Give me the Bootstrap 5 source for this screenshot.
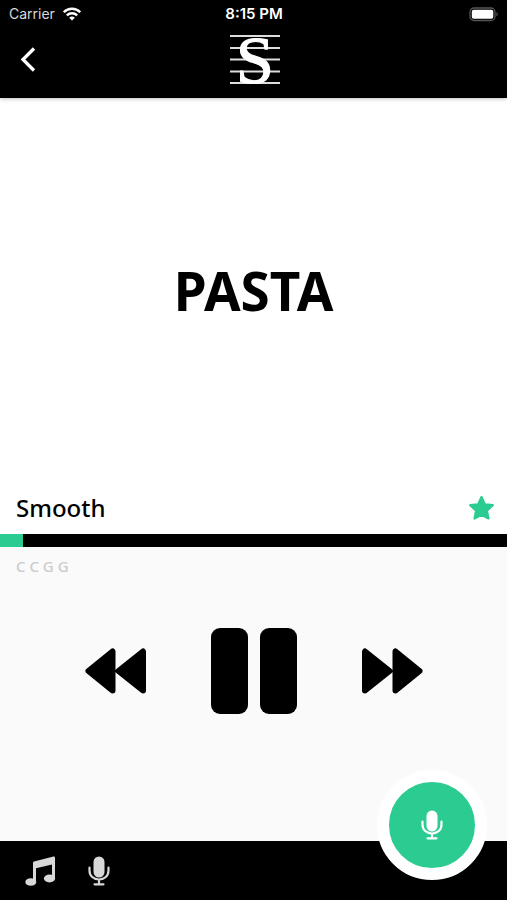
<!DOCTYPE html>
<html lang="en">
<head>
<meta charset="utf-8">
<meta name="viewport" content="width=device-width, initial-scale=1">
<title>Smooth</title>
<link href="https://cdn.jsdelivr.net/npm/bootstrap@5.3.0/dist/css/bootstrap.min.css" rel="stylesheet">
<style>
  :root { --accent: #2bcb91; }
  body { font-family: "Noto Sans", sans-serif; color: #000; background: #fafafa; }
  svg { display: block; }
  .top-bar { background: #000; color: #fff; box-shadow: 0 1px 4px rgba(0,0,0,.25); z-index: 1; }
  .status { font: 14px/28px Inter, sans-serif; height: 28px; padding: 0 8px 0 9px; }
  .status .carrier { color: #d8d8d8; }
  .status .clock { font-weight: 600; font-size: 15px; }
  .title-row { height: 70px; padding: 0 18px 0 16px; }
  .logo { overflow: visible; }
  .plain { background: none; border: 0; padding: 0; color: inherit; }
  .lyric-area { flex: 384 1 0; background: #fff; padding-top: 2px; }
  .lyric { font-size: 53px; line-height: 64px; font-weight: 700; }
  .song-row { background: #fff; height: 51px; padding: 0 12px 1px 16px; }
  .song-name { font-size: 24px; line-height: 32px; font-weight: 500; }
  .song-progress { height: 13px; background: #000; border-radius: 0; }
  .song-progress .progress-bar { background: var(--accent); }
  .deck { flex: 295 1 0; }
  .notes { font-size: 15px; line-height: 20px; font-weight: 500; color: #ccc; padding: 9px 16px 0; }
  .transport { gap: 64px; padding-top: 52px; }
  .bottom-bar { background: #000; color: #d8d8d8; height: 59px; padding: 0 25px; gap: 32px; }
  .record { position: absolute; right: 20px; bottom: 20px; width: 110px; height: 110px; border: 12px solid #fff; background: var(--accent); color: #fff; }
</style>
<script src="https://cdn.jsdelivr.net/npm/bootstrap@5.3.0/dist/js/bootstrap.bundle.min.js"></script>
</head>
<body>
<svg class="d-none" aria-hidden="true">
  <symbol id="mic" viewBox="0 0 22 30">
    <rect x="5.500" y="0.500" width="11" height="21" rx="5.500" fill="currentColor"/>
    <path d="M1.500 11.500V14.500C1.500 20 5.500 23.500 11 23.500S20.500 20 20.500 14.500V11.500M11 23.500V28M6.500 28.300H15.500" fill="none" stroke="currentColor" stroke-width="2.200" stroke-linecap="round"/>
  </symbol>
  <symbol id="skip" viewBox="0 0 62 48">
    <path d="M4 4.500V43.500L28.500 24ZM34.500 4.500V43.500L58.500 24Z" fill="currentColor" stroke="currentColor" stroke-width="6" stroke-linejoin="round"/>
  </symbol>
</svg>
<div class="position-relative d-flex flex-column min-vh-100">
  <header class="top-bar">
    <div class="status row g-0 align-items-center">
      <div class="col d-flex align-items-center gap-2">
        <span class="carrier">Carrier</span>
        <svg width="18" height="14" viewBox="0 0 18 14" fill="none" stroke="#fff" stroke-width="2.300" aria-label="Wi-Fi" role="img"><path d="M.8 5.200C5.500.6 12.500.6 17.200 5.200M3.800 8.400C6.800 5.500 11.200 5.500 14.200 8.400"/><path d="M9 13.600L6.200 10.800Q9 8.300 11.800 10.800Z" fill="#fff" stroke="none"/></svg>
      </div>
      <div class="col-auto clock">8:15 PM</div>
      <div class="col d-flex justify-content-end">
        <svg width="30" height="15" viewBox="0 0 30 15" aria-label="Battery full" role="img"><rect x="1" y="1" width="25" height="12.500" rx="4" fill="none" stroke="#555" stroke-width="1.300"/><rect x="2.800" y="2.800" width="21.500" height="9" rx="2" fill="#fff"/><path d="M27.500 5Q30 7.200 27.500 9.500Z" fill="#666"/></svg>
      </div>
    </div>
    <div class="title-row row g-0">
      <div class="col pt-3 ps-1">
        <button class="plain" type="button" aria-label="Back"><svg width="18" height="30" viewBox="0 0 18 30"><path d="M14 4.500L3 15.500L14 26.500" fill="none" stroke="#fff" stroke-width="3.300"/></svg></button>
      </div>
      <div class="col-auto pt-1">
        <svg class="logo" width="50" height="58" viewBox="0 0 50 58" role="img" aria-label="S">
          <path d="M0 4H50M0 16H50M0 27.500H50M0 39.500H50M0 51H50" stroke="#ddd" stroke-width="2"/>
          <text x="25" y="50.500" text-anchor="middle" font-family="Liberation Serif, serif" font-size="68" fill="#fff" stroke="#fff" stroke-width="1.200">S</text>
        </svg>
      </div>
      <div class="col"></div>
    </div>
  </header>
  <main class="flex-grow-1 d-flex flex-column">
    <section class="lyric-area d-flex align-items-center justify-content-center">
      <h1 class="lyric m-0">PASTA</h1>
    </section>
    <div class="song-row d-flex align-items-center justify-content-between">
      <h2 class="song-name m-0">Smooth</h2>
      <button class="plain" type="button" aria-label="Favourite"><svg width="27" height="26" viewBox="0 0 27 26"><path d="M13.500 2L16.800 9.300L24.800 10.200L18.900 15.700L20.500 23.500L13.500 19.700L6.500 23.500L8.100 15.700L2.200 10.200L10.200 9.300Z" fill="#2bcb91" stroke="#2bcb91" stroke-width="2.200" stroke-linejoin="round"/></svg></button>
    </div>
    <div class="progress song-progress" role="progressbar" aria-label="Song position" aria-valuenow="5" aria-valuemin="0" aria-valuemax="100">
      <div class="progress-bar" style="width: 4.5%"></div>
    </div>
    <section class="deck">
      <p class="notes m-0">C C G G</p>
      <div class="transport d-flex align-items-center justify-content-center">
        <button class="plain" type="button" aria-label="Rewind"><svg width="62" height="48" viewBox="0 0 62 48"><use href="#skip" transform="matrix(-1 0 0 1 62 0)"/></svg></button>
        <button class="plain" type="button" aria-label="Pause"><svg width="86" height="86" viewBox="0 0 86 86"><rect width="37" height="86" rx="9"/><rect x="49" width="37" height="86" rx="9"/></svg></button>
        <button class="plain" type="button" aria-label="Fast forward"><svg width="62" height="48"><use href="#skip"/></svg></button>
      </div>
    </section>
  </main>
  <footer class="bottom-bar d-flex align-items-center">
    <button class="plain" type="button" aria-label="Songs"><svg width="31" height="30" viewBox="0 0 31 30" fill="currentColor"><path d="M8 7Q8 5.900 9 5.600L28.500.5Q30 .2 30 1.700V22H27V8.500L11 12.300V26H8Z"/><ellipse cx="5.800" cy="26" rx="5.500" ry="3.800"/><ellipse cx="24.500" cy="22.500" rx="5.600" ry="3.900"/></svg></button>
    <button class="plain" type="button" aria-label="Recordings"><svg width="22" height="30"><use href="#mic"/></svg></button>
  </footer>
  <button class="record rounded-circle p-0 d-flex align-items-center justify-content-center" type="button" aria-label="Record"><svg width="22" height="30"><use href="#mic"/></svg></button>
</div>
</body>
</html>
